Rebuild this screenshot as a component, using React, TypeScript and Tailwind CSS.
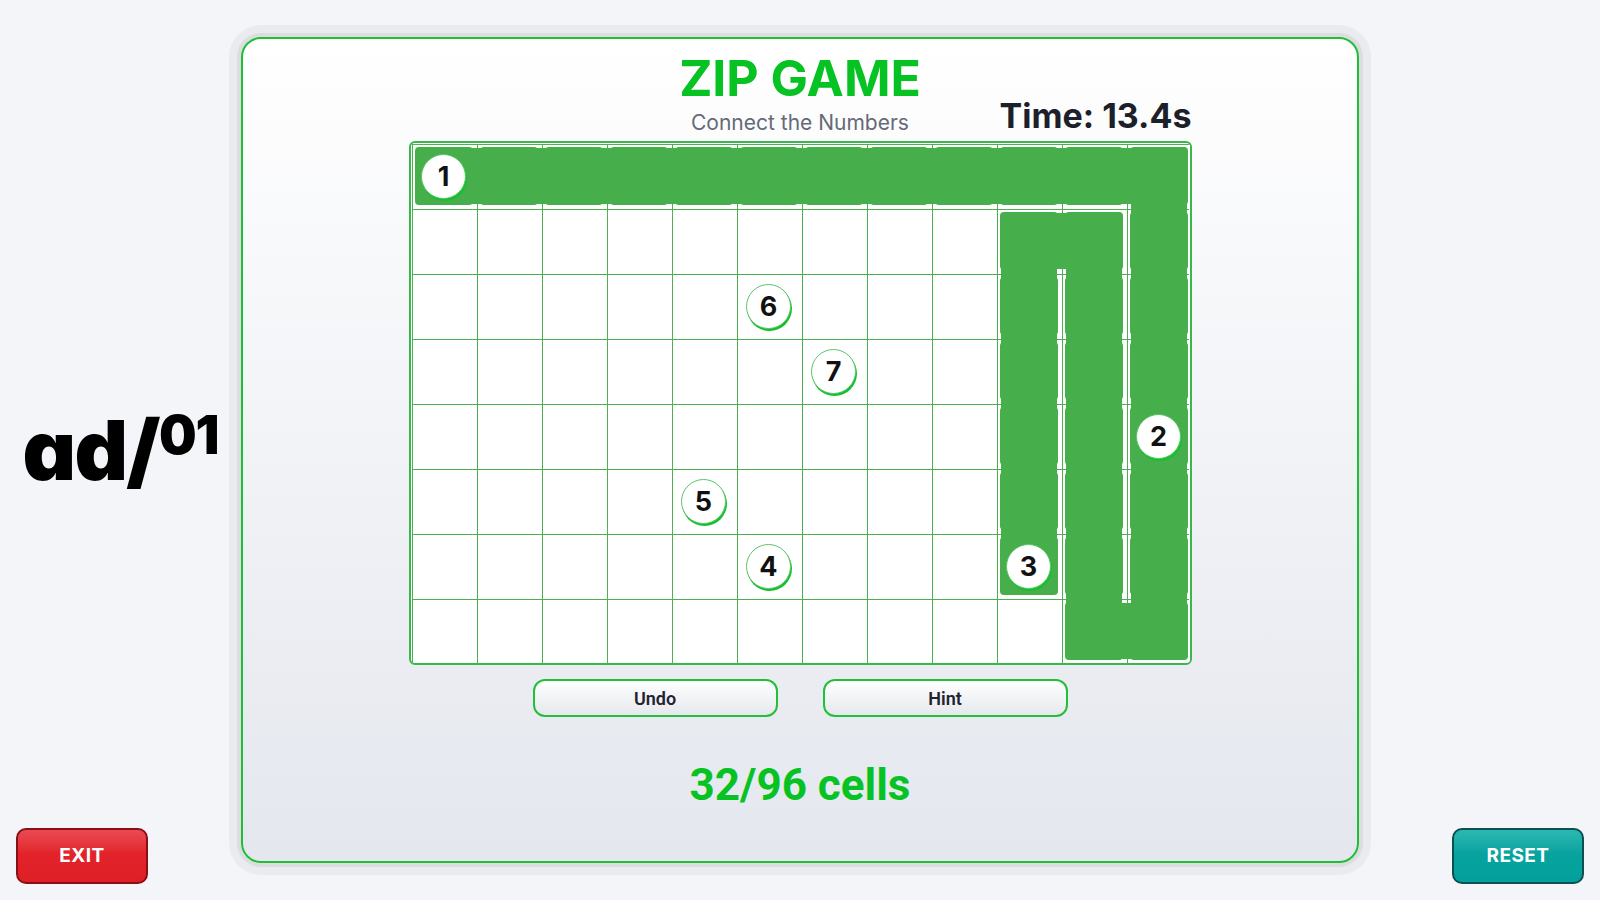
import React from 'react';

type Cell = [number, number];

const COLS = 12;
const ROWS = 8;

// the drawn route, in the order the player dragged it
function buildPath(): Cell[] {
  const cells: Cell[] = [];
  for (let c = 0; c < COLS; c++) cells.push([0, c]);
  for (let r = 1; r < ROWS; r++) cells.push([r, 11]);
  for (let r = ROWS - 1; r >= 1; r--) cells.push([r, 10]);
  for (let r = 1; r <= 6; r++) cells.push([r, 9]);
  return cells;
}

const key = (r: number, c: number) => `${r}-${c}`;

const path = buildPath();
const filled = new Set(path.map(([r, c]) => key(r, c)));
const linkRight = new Set<string>();
const linkDown = new Set<string>();
for (let i = 1; i < path.length; i++) {
  const [r1, c1] = path[i - 1];
  const [r2, c2] = path[i];
  if (r1 === r2) linkRight.add(key(r1, Math.min(c1, c2)));
  else linkDown.add(key(Math.min(r1, r2), c1));
}

const numbers: Record<string, number> = {
  '0-0': 1,
  '4-11': 2,
  '6-9': 3,
  '6-5': 4,
  '5-4': 5,
  '2-5': 6,
  '3-6': 7,
};

function GridCell({ r, c }: { r: number; c: number }) {
  const k = key(r, c);
  const num = numbers[k];
  return (
    <div className="relative bg-white">
      {filled.has(k) && (
        <div className="absolute left-[2px] top-[2px] h-[58px] w-[58px] rounded-[4px] bg-[#46ae4a]" />
      )}
      {linkRight.has(k) && (
        <div className="absolute left-[56px] top-[3px] z-10 h-[56px] w-[13px] bg-[#46ae4a]" />
      )}
      {linkDown.has(k) && (
        <div className="absolute left-[3px] top-[56px] z-10 h-[13px] w-[56px] bg-[#46ae4a]" />
      )}
      {num && (
        <div className="absolute left-0 top-0 z-20 flex h-[62px] w-[62px] items-center justify-center">
          <span className="flex h-[45px] w-[45px] items-center justify-center rounded-full border border-[#5cc46a] bg-white text-[27px] font-bold leading-none text-[#111111] shadow-[1px_2px_0_#14c02c]">
            {num}
          </span>
        </div>
      )}
    </div>
  );
}

function Board() {
  const cells = [];
  for (let r = 0; r < ROWS; r++) {
    for (let c = 0; c < COLS; c++) cells.push(<GridCell key={key(r, c)} r={r} c={c} />);
  }
  return (
    <div className="h-[524px] w-[783px] overflow-hidden rounded-md border-2 border-[#36b94a] bg-white p-px">
      <div className="grid grid-cols-[repeat(12,64px)] grid-rows-[repeat(8,64px)] gap-px bg-[#4caf50] p-px">
        {cells}
      </div>
    </div>
  );
}

export default function App() {
  return (
    <div className="grid h-[900px] w-full grid-cols-[1fr_1118px_1fr] bg-[#f4f5f8] font-['Inter',sans-serif]">
      <div className="grid h-full grid-rows-[1fr_auto_1fr] p-4">
        <div />
        <div className="flex items-start justify-self-center text-black [font-feature-settings:'cv11']">
          <span className="text-[83px] font-black leading-none tracking-[-0.02em]">ad/</span>
          <span className="text-[53px] font-black leading-none tracking-[-0.02em]">01</span>
        </div>
        <button className="h-[56px] w-[132px] self-end justify-self-start rounded-[10px] border-2 border-[#8a0f14] bg-linear-to-b from-[#ea4a54] via-[#e2232b] via-45% to-[#df1f26] text-[19px] font-bold tracking-wide text-white">
          EXIT
        </button>
      </div>

      <div className="flex h-[826px] w-[1118px] flex-col items-center self-center rounded-[20px] border-2 border-[#1fbf35] bg-linear-to-b from-white to-[#e4e7ee] pt-[14px] shadow-[0_0_0_4px_#dcdde1,0_0_0_12px_#eaebee]">
        <h1 className="text-[50px] font-bold leading-none text-[#06c323]">ZIP GAME</h1>
        <div className="-mt-1 grid w-[783px] grid-cols-[1fr_auto_1fr] items-end">
          <div />
          <p className="text-[21px] leading-none text-[#646a77]">Connect the Numbers</p>
          <p className="justify-self-end text-[34px] font-bold leading-none text-[#1b202b]">Time: 13.4s</p>
        </div>
        <div className="mt-[8px]">
          <Board />
        </div>
        <div className="mt-[14px] flex gap-[45px]">
          <button className="h-[38px] w-[245px] rounded-xl border-2 border-[#22c03a] bg-linear-to-b from-white to-[#e6e8ed] font-['Roboto',sans-serif] text-[18px] font-semibold text-[#1f2430]">
            Undo
          </button>
          <button className="h-[38px] w-[245px] rounded-xl border-2 border-[#22c03a] bg-linear-to-b from-white to-[#e6e8ed] font-['Roboto',sans-serif] text-[18px] font-semibold text-[#1f2430]">
            Hint
          </button>
        </div>
        <p className="mt-[46px] font-['Roboto',sans-serif] text-[44px] font-bold leading-none text-[#06c323]">
          32/96 cells
        </p>
      </div>

      <div className="grid h-full grid-rows-[1fr_auto_1fr] p-4">
        <div />
        <div />
        <button className="h-[56px] w-[132px] self-end justify-self-end rounded-[10px] border-2 border-[#0c5052] bg-linear-to-b from-[#2bb8b3] via-[#08a39f] via-45% to-[#02a09c] text-[19px] font-bold tracking-wide text-white">
          RESET
        </button>
      </div>
    </div>
  );
}
